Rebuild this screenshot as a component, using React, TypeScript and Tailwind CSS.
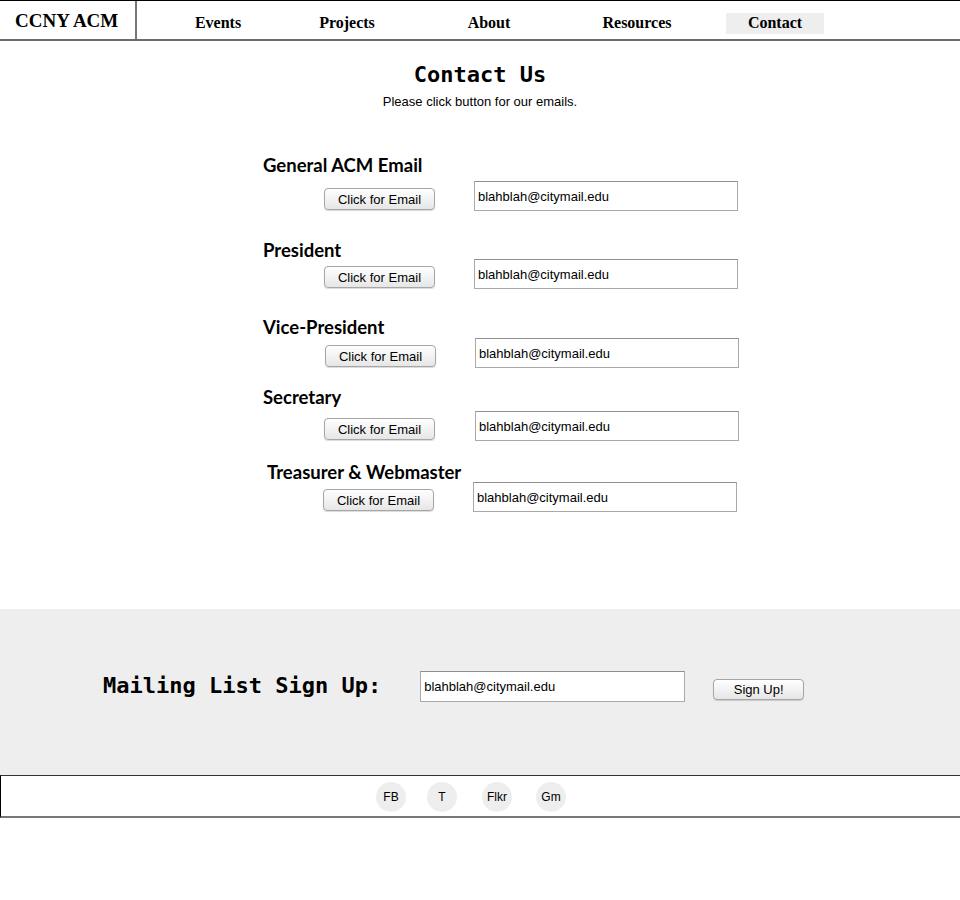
const navItems = [
  { label: "Events", cls: "ml-[32px]" },
  { label: "Projects", cls: "ml-[31px]" },
  { label: "About", cls: "ml-[44px]" },
  { label: "Resources", cls: "ml-[50px]" },
  { label: "Contact", cls: "ml-[40px] bg-[#eeeeee]", active: true },
];

const contacts = [
  { title: "General ACM Email", top: "mt-[44px]", row: "mt-[5px]", hx: "pl-[263px]", bx: "pl-[324px]", ix: "ml-[39px]" },
  { title: "President", top: "mt-[28px]", row: "mt-[-2px]", hx: "pl-[263px]", bx: "pl-[324px]", ix: "ml-[39px]" },
  { title: "Vice-President", top: "mt-[27px]", row: "mt-[0px]", hx: "pl-[263px]", bx: "pl-[325px]", ix: "ml-[39px]" },
  { title: "Secretary", top: "mt-[18px]", row: "mt-[3px]", hx: "pl-[263px]", bx: "pl-[324px]", ix: "ml-[40px]" },
  { title: "Treasurer & Webmaster", top: "mt-[20px]", row: "mt-[-1px]", hx: "pl-[267px]", bx: "pl-[323px]", ix: "ml-[39px]" },
];

const socials = [
  { label: "FB", cls: "" },
  { label: "T", cls: "ml-[21px]" },
  { label: "Flkr", cls: "ml-[25px]" },
  { label: "Gm", cls: "ml-[24px]" },
];

function MacButton({ children, className }: { children: React.ReactNode; className?: string }) {
  return (
    <button
      type="button"
      className={
        "rounded-[4px] border border-[#a6a6a6] bg-gradient-to-b from-white to-[#e6e6e6] text-[13px] leading-none text-black shadow-[0_1px_1px_rgba(0,0,0,0.15)] font-['Liberation_Sans',Arial,sans-serif] " +
        (className ?? "")
      }
    >
      {children}
    </button>
  );
}

function EmailBox({ className }: { className?: string }) {
  return (
    <input
      readOnly
      value="blahblah@citymail.edu"
      className={
        "border border-[#a9a9a9] border-t-[#8f8f8f] bg-white px-[3px] text-[13px] text-black outline-none font-['Liberation_Sans',Arial,sans-serif] " +
        (className ?? "")
      }
    />
  );
}

export default function App() {
  return (
    <div className="min-h-[900px] bg-white font-['Liberation_Sans',Arial,sans-serif] text-black">
      {/* nav */}
      <nav className="flex h-[41px] border-t border-b-2 border-t-black border-b-[#6b6b6b]">
        <div className="flex w-[137px] items-center border-r-2 border-[#777777] pl-[15px]">
          <span className="font-['Liberation_Serif',serif] text-[19px] font-bold leading-none">CCNY ACM</span>
        </div>
        <ul className="flex items-center font-['Liberation_Serif',serif] text-[16px] font-bold">
          {navItems.map((item) => (
            <li
              key={item.label}
              className={"mt-[6px] flex h-[21px] w-[98px] items-center justify-center " + item.cls}
            >
              {item.label}
            </li>
          ))}
        </ul>
      </nav>

      {/* contact */}
      <main className="pb-[97px]">
        <h1 className="mt-[20px] text-center font-['DejaVu_Sans_Mono',monospace] text-[22px] font-bold leading-[28px]">
          Contact Us
        </h1>
        <p className="mt-[5px] text-center text-[13px] leading-[16px]">Please click button for our emails.</p>

        {contacts.map((c) => (
          <section key={c.title} className={c.top}>
            <h2 className={"font-['Lato',sans-serif] text-[18.5px] font-bold leading-[22px] " + c.hx}>{c.title}</h2>
            <div className={"flex items-start " + c.row + " " + c.bx}>
              <MacButton className="mt-[7px] h-[22px] w-[111px]">Click for Email</MacButton>
              <EmailBox className={"h-[30px] w-[264px] " + c.ix} />
            </div>
          </section>
        ))}
      </main>

      {/* mailing list */}
      <div className="flex h-[166px] items-start bg-[#eeeeee] pl-[103px] pt-[62px]">
        <h3 className="mt-[1px] font-['DejaVu_Sans_Mono',monospace] text-[22px] font-bold leading-[28px]">
          Mailing List Sign Up:
        </h3>
        <EmailBox className="ml-[39px] h-[31px] w-[265px]" />
        <MacButton className="ml-[28px] mt-[8px] h-[21px] w-[91px]">Sign Up!</MacButton>
      </div>

      {/* footer */}
      <footer className="flex h-[43px] items-start justify-center border-t border-l border-b-2 border-t-[#333333] border-l-black border-b-[#777777] pr-[19px] pt-[6px]">
        {socials.map((s) => (
          <div
            key={s.label}
            className={"flex h-[30px] w-[30px] items-center justify-center rounded-full bg-[#eeeeee] text-[12px] " + s.cls}
          >
            {s.label}
          </div>
        ))}
      </footer>
    </div>
  );
}
